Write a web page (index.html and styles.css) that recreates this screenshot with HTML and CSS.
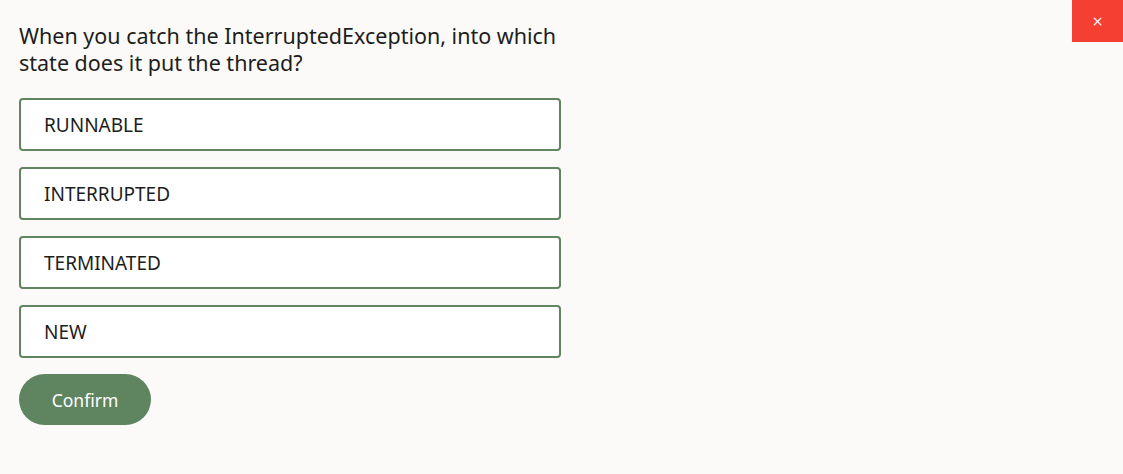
FILE: index.html
```html
<!DOCTYPE html>
<html>
<head>
<meta charset="utf-8">
<link rel="stylesheet" href="styles.css">
</head>
<body>
<button class="close" aria-label="Close">×</button>
<main class="quiz">
  <h1 class="question">When you catch the InterruptedException, into which state does it put the thread?</h1>
  <div class="options">
    <button class="option">RUNNABLE</button>
    <button class="option">INTERRUPTED</button>
    <button class="option">TERMINATED</button>
    <button class="option">NEW</button>
  </div>
  <button class="confirm">Confirm</button>
</main>
</body>
</html>
```
FILE: styles.css
```css
html, body {
  margin: 0;
  padding: 0;
  background: #fbfaf8;
  font-family: "Noto Sans", "Open Sans", sans-serif;
  color: #1d1d1b;
}
.close {
  position: absolute;
  top: 0;
  right: 0;
  width: 51px;
  height: 42px;
  border: 0;
  background: #f63f33;
  color: #fff;
  font-size: 14px;
  font-family: "DejaVu Sans", sans-serif;
  padding: 0;
  cursor: pointer;
}
.quiz {
  padding: 19px 19px 0 19px;
  width: 542px;
}
.question {
  margin: 0;
  font-size: 21.5px;
  font-weight: 400;
  line-height: 27px;
  padding-top: 3px;
  width: 560px;
}
.options {
  margin-top: 22px;
  display: flex;
  flex-direction: column;
  gap: 16px;
}
.option {
  height: 53px;
  box-sizing: border-box;
  border: 2px solid #5f8660;
  border-radius: 4px;
  background: #fff;
  text-align: left;
  padding: 0 0 0 23px;
  font-family: inherit;
  font-size: 19px;
  color: #1d1d1b;
}
.confirm {
  margin-top: 16px;
  width: 132px;
  height: 51px;
  border: 0;
  border-radius: 26px;
  background: #5f8560;
  color: #fff;
  font-family: inherit;
  font-size: 17.5px;
  padding: 0;
}
```
